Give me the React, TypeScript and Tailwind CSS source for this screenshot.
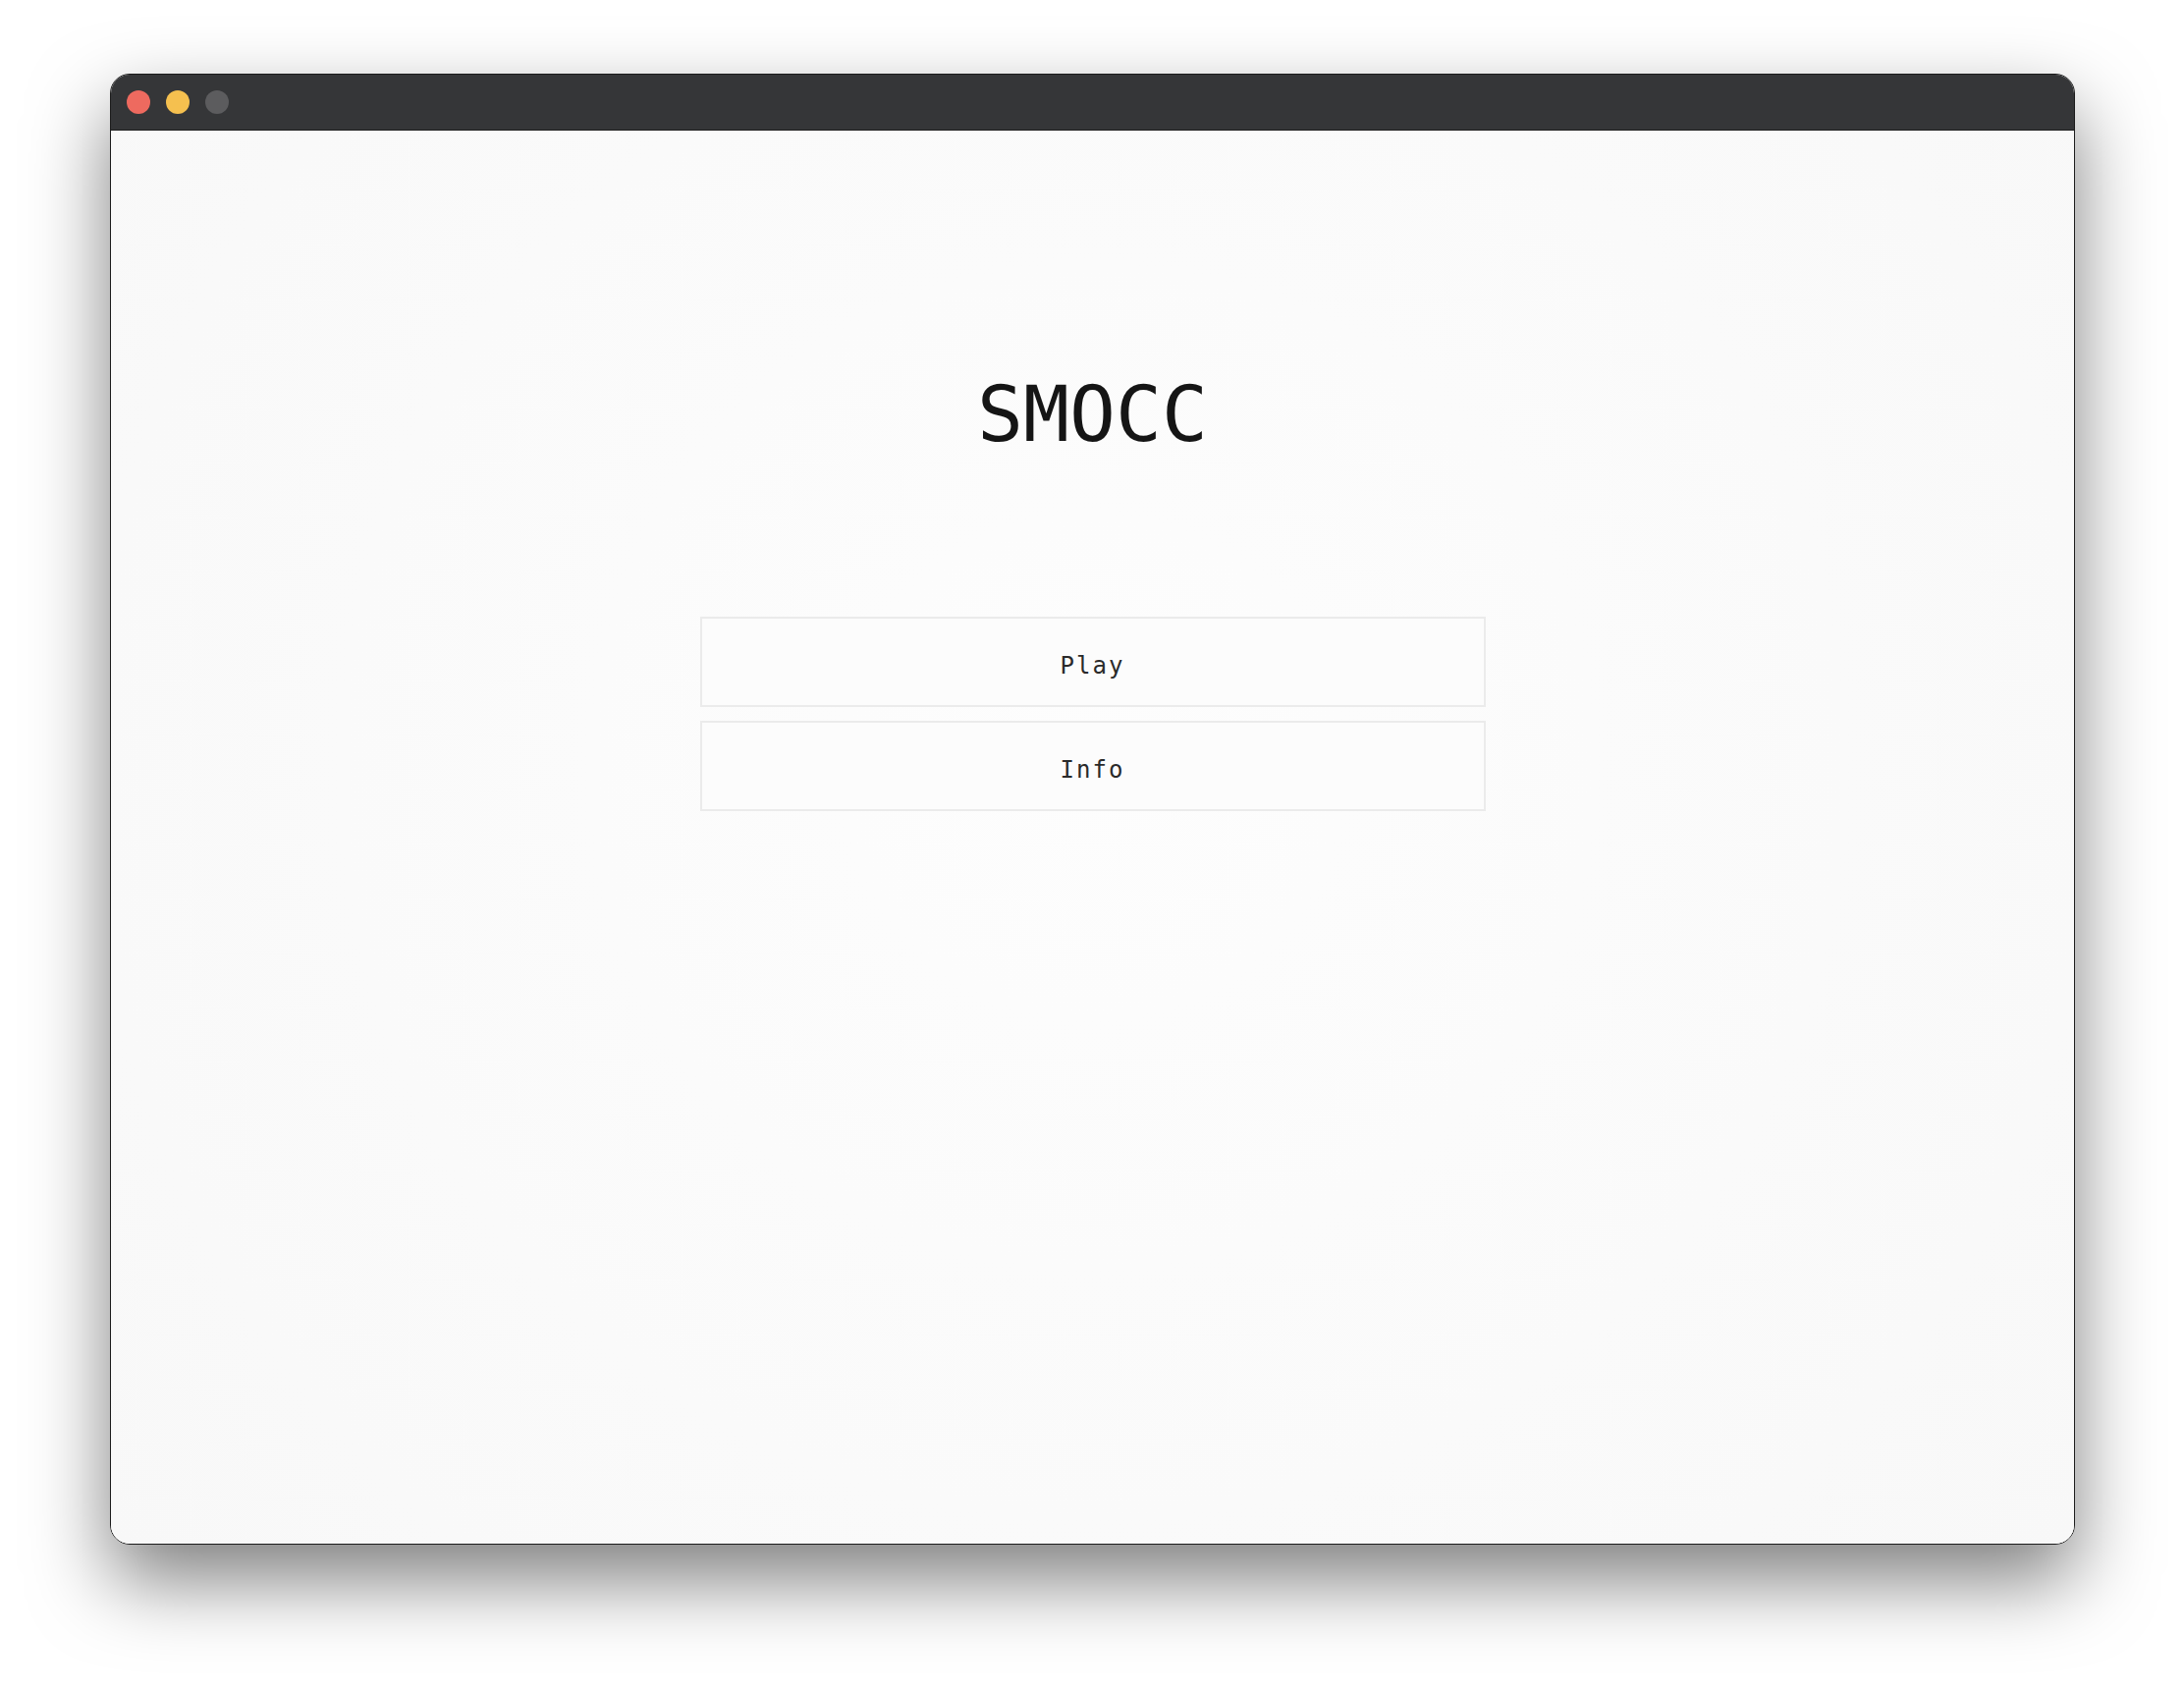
export default function App() {
  const buttons = ["Play", "Info"];

  return (
    <div className="w-[2224px] h-[1720px] bg-white flex flex-col pt-[75px] pl-[112px]">
      <div className="w-[2001px] h-[1498px] flex flex-col rounded-[20px] border border-[#1c1c1c] overflow-hidden shadow-[0_36px_80px_rgba(0,0,0,0.5)]">
        <div className="h-[57px] bg-[#353638] border-b border-[#1e1e1e] flex items-center gap-4 pl-4">
          <div className="w-6 h-6 rounded-full bg-[#ee6a5f]"></div>
          <div className="w-6 h-6 rounded-full bg-[#f5c04f]"></div>
          <div className="w-6 h-6 rounded-full bg-[#5c5c5e]"></div>
        </div>
        <div
          className="flex-1 bg-[radial-gradient(circle_at_50%_45%,#fdfdfd,#f8f8f8)] flex flex-col items-center pt-[250px]"
          style={{ fontFamily: '"DejaVu Sans Mono", monospace' }}
        >
          <h1 className="text-[78px] leading-none text-[#151515]">SMOCC</h1>
          <div className="mt-[167px] w-[800px] flex flex-col gap-[14px]">
            {buttons.map((label) => (
              <button
                key={label}
                className="h-[92px] pt-[8px] border-2 border-[#ebebeb] bg-[#fcfcfc] text-[24px] tracking-[2px] text-[#2a2a2a]"
              >
                {label}
              </button>
            ))}
          </div>
        </div>
      </div>
    </div>
  );
}
